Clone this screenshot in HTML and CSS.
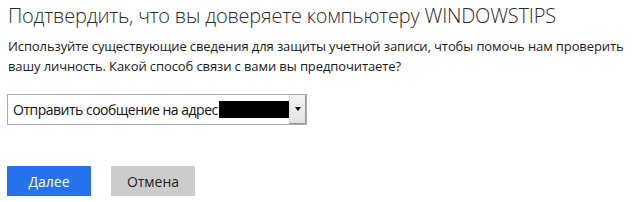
FILE: index.html
```html
<!DOCTYPE html>
<html lang="ru">
<head>
<meta charset="utf-8">
<title>Подтвердить</title>
<link rel="stylesheet" href="styles.css">
</head>
<body>
<div class="page">
  <h1 class="title">Подтвердить, что вы доверяете компьютеру WINDOWSTIPS</h1>
  <p class="desc">Используйте существующие сведения для защиты учетной записи, чтобы помочь нам проверить вашу личность. Какой способ связи с вами вы предпочитаете?</p>
  <div class="select">
    <span class="select-text">Отправить сообщение на адрес</span>
    <span class="redact"></span>
    <span class="select-btn"><span class="arrow"></span></span>
  </div>
  <div class="actions">
    <button class="btn btn-primary">Далее</button>
    <button class="btn btn-secondary">Отмена</button>
  </div>
</div>
</body>
</html>
```
FILE: styles.css
```css
html, body {
  margin: 0;
  background: #fff;
}
.page {
  padding: 2px 4px 0 7px;
  font-family: "Open Sans", "Noto Sans", sans-serif;
  color: #222;
}
.title {
  margin: 0;
  font-size: 20px;
  font-weight: 300;
  line-height: 28px;
  letter-spacing: -0.2px;
  color: #2a2a2a;
  padding-left: 1px;
}
.desc {
  margin: 6px 0 0 0;
  font-size: 13px;
  line-height: 20px;
  letter-spacing: -0.1px;
  color: #1a1a1a;
  padding-left: 1px;
  width: 622px;
}
.select {
  margin-top: 18px;
  width: 300px;
  height: 31px;
  border: 1px solid #a9a9a9;
  display: flex;
  align-items: center;
  padding-left: 5px;
  box-sizing: border-box;
}
.select-text {
  font-size: 14px;
  letter-spacing: -0.5px;
  color: #111;
  white-space: nowrap;
}
.redact {
  flex-shrink: 0;
  width: 70px;
  height: 17px;
  background: #000;
  margin-left: 1px;
}
.select-btn {
  flex-shrink: 0;
  margin-left: auto;
  width: 17px;
  height: 29px;
  background: linear-gradient(#f4f4f4, #e2e2e2);
  border-left: 1px solid #dcdcdc;
  border-right: 1px solid #9a9a9a;
  border-bottom: 1px solid #9a9a9a;
  box-sizing: border-box;
  display: flex;
  align-items: center;
  justify-content: center;
}
.arrow {
  width: 0;
  height: 0;
  border-left: 3.5px solid transparent;
  border-right: 3.5px solid transparent;
  border-top: 4px solid #000;
}
.actions {
  margin-top: 41px;
  display: flex;
  gap: 20px;
}
.btn {
  width: 84px;
  height: 30px;
  border: none;
  font-family: "Open Sans", "Noto Sans", sans-serif;
  font-size: 14px;
  padding: 0;
  margin: 0;
}
.btn-primary {
  background: #2672ec;
  color: #fff;
}
.btn-secondary {
  background: #cccccc;
  color: #222;
}
```
